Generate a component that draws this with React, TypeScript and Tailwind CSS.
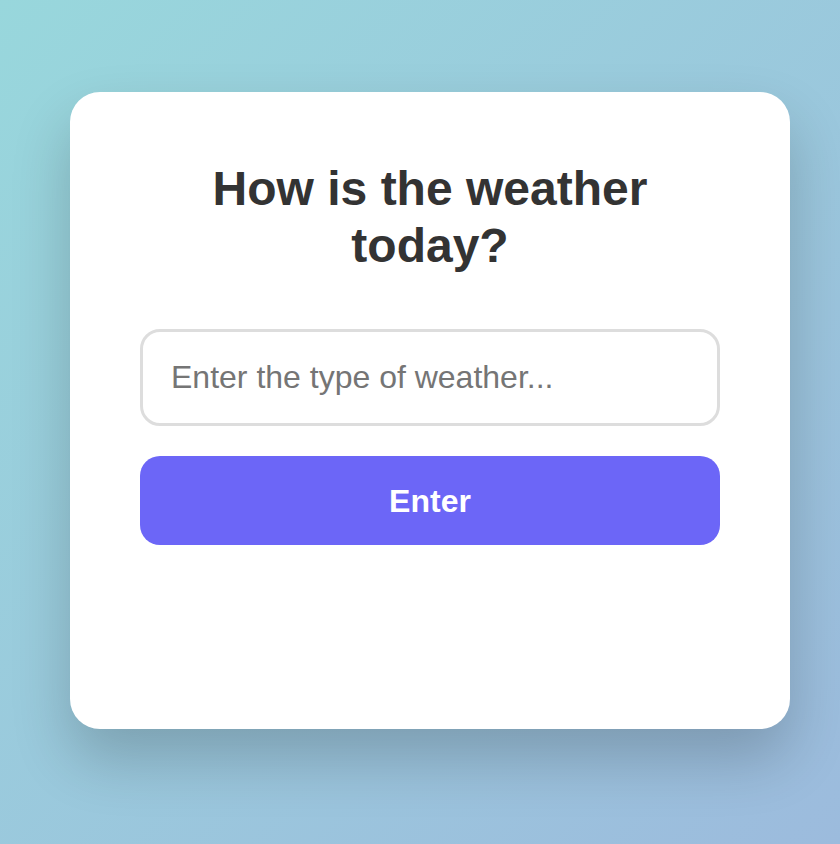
import React from 'react';

export default function App() {
  const [weather, setWeather] = React.useState('');

  return (
    <div
      className="min-h-screen w-full bg-gradient-to-br from-[#98d7dc] to-[#9cbbdd] pt-[92px] pl-[70px]"
      style={{ fontFamily: '"Liberation Sans", Arial, Helvetica, sans-serif' }}
    >
      <div className="w-[720px] h-[637px] bg-white rounded-[30px] shadow-[0_30px_60px_rgba(0,0,0,0.2)] px-[70px] pt-[68px] flex flex-col">
        <h1 className="text-[48px] leading-[57px] font-bold text-[#333] text-center px-[30px]">
          How is the weather today?
        </h1>

        <input
          type="text"
          value={weather}
          onChange={(e) => setWeather(e.target.value)}
          placeholder="Enter the type of weather..."
          className="mt-[55px] h-[97px] w-full rounded-[20px] border-[3px] border-[#dddddd] bg-white pl-[28px] text-[32px] text-[#333] placeholder:text-[#757575] outline-none"
        />

        <button className="mt-[30px] h-[89px] w-full rounded-[20px] bg-[#6c66f7] text-white text-[32px] font-bold">
          Enter
        </button>
      </div>
    </div>
  );
}
